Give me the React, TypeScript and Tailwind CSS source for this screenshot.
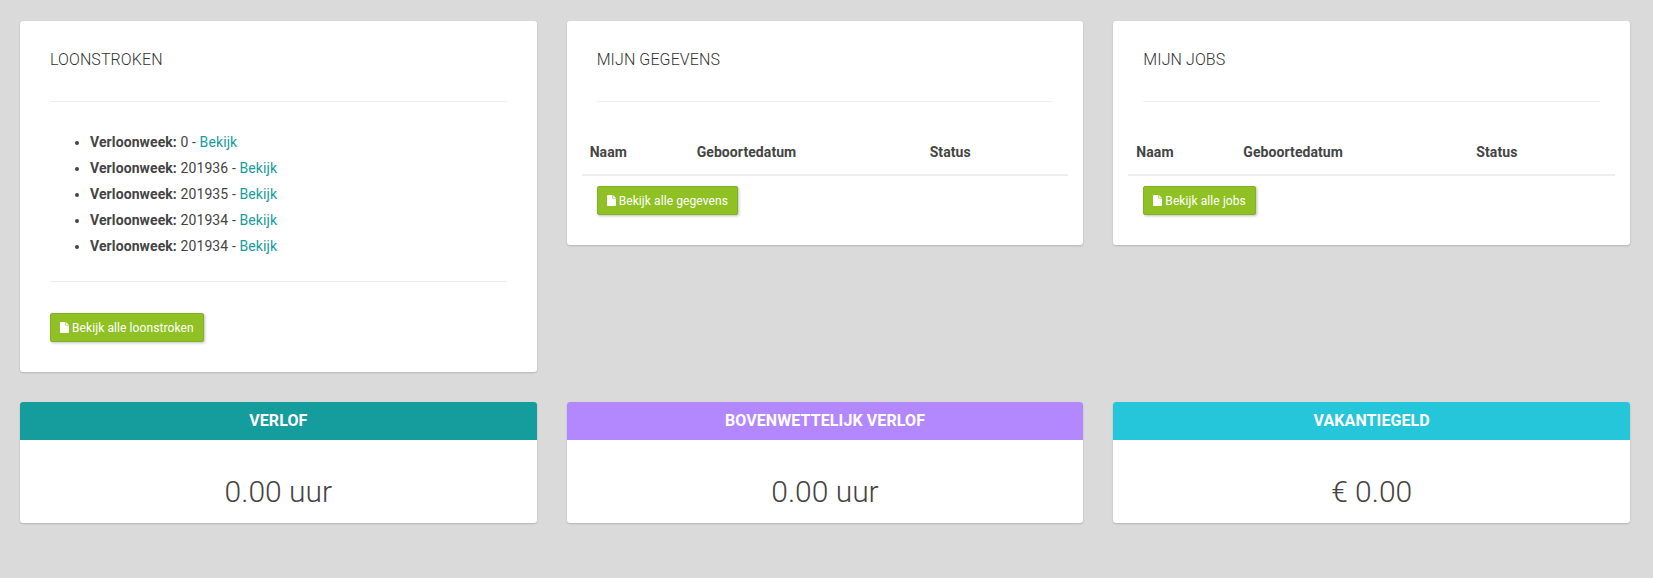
import React from "react";

const font = { fontFamily: "Roboto, sans-serif" };

function FileIcon() {
  return (
    <svg width="9" height="11" viewBox="0 0 9 11" className="shrink-0" aria-hidden="true">
      <path d="M0 .8C0 .4.4 0 .8 0H5.4V2.9C5.4 3.3 5.7 3.6 6.1 3.6H9V10.2C9 10.6 8.6 11 8.2 11H.8C.4 11 0 10.6 0 10.2Z" fill="#fff" />
      <path d="M6 0 9 3H6Z" fill="#fff" opacity=".85" />
    </svg>
  );
}

function Btn({ label }: { label: string }) {
  return (
    <button className="flex h-[29px] items-center gap-[3px] rounded-[2px] border border-[#84b021] bg-[#8fc124] px-[9px] text-[12px] tracking-[0.09px] text-white shadow-[1px_1px_3px_rgba(0,0,0,0.25)]">
      <FileIcon />
      <span>{label}</span>
    </button>
  );
}

function Title({ children }: { children: React.ReactNode }) {
  return (
    <>
      <h4 className="text-[16px] leading-[18px] font-light tracking-[0.1px] text-[#333]">{children}</h4>
      <hr className="mt-[32px] border-t border-[#eeeeee]" />
    </>
  );
}

function TableCard({ title, btn }: { title: string; btn: string }) {
  return (
    <div className="self-start rounded-[3px] bg-white px-[30px] pt-[30px] pb-[30px] shadow-[0_1px_2px_rgba(0,0,0,0.18)]">
      <Title>{title}</Title>
      <table className="mt-[27px] -mx-[15px] w-[calc(100%+30px)] table-fixed text-left text-[14px] font-bold tracking-[0.08px] text-[#444]">
        <thead>
          <tr className="border-b-2 border-[#eeeeee]">
            <th className="w-[107px] px-2 pt-[13px] pb-[12px] leading-[20px] font-bold">Naam</th>
            <th className="w-[233px] px-2 pt-[13px] pb-[12px] leading-[20px] font-bold">Geboortedatum</th>
            <th className="px-2 pt-[13px] pb-[12px] leading-[20px] font-bold">Status</th>
          </tr>
        </thead>
      </table>
      <div className="mt-[10px] flex">
        <Btn label={btn} />
      </div>
    </div>
  );
}

function StatCard({ title, value, color }: { title: string; value: string; color: string }) {
  return (
    <div className="overflow-hidden rounded-[3px] bg-white shadow-[0_1px_2px_rgba(0,0,0,0.18)]">
      <div className={`flex h-[38px] items-center justify-center text-[16px] font-bold tracking-[0.1px] text-white ${color}`}>
        {title}
      </div>
      <div className="flex h-[83px] items-start justify-center pt-[32px] text-[30px] leading-[40px] font-light text-[#444]">
        {value}
      </div>
    </div>
  );
}

const rows = ["0", "201936", "201935", "201934", "201934"];

export default function App() {
  return (
    <div style={font} className="min-h-[578px] bg-[#dadada] pt-[21px] pr-[23px] pl-[20px]">
      <div className="grid grid-cols-3 items-start gap-x-[30px] gap-y-[30px]">
        <div className="rounded-[3px] bg-white px-[30px] pt-[30px] pb-[30px] shadow-[0_1px_2px_rgba(0,0,0,0.18)]">
          <Title>LOONSTROKEN</Title>
          <ul className="mt-[27px] list-disc pl-[40px] text-[14px] leading-[26px] tracking-[0.1px] text-[#444]">
            {rows.map((r, i) => (
              <li key={i}>
                <b className="font-bold">Verloonweek:</b> {r} - <a className="text-[#159c9c]">Bekijk</a>
              </li>
            ))}
          </ul>
          <hr className="mt-[22px] border-t border-[#eeeeee]" />
          <div className="mt-[31px] flex">
            <Btn label="Bekijk alle loonstroken" />
          </div>
        </div>
        <TableCard title="MIJN GEGEVENS" btn="Bekijk alle gegevens" />
        <TableCard title="MIJN JOBS" btn="Bekijk alle jobs" />
        <StatCard title="VERLOF" value="0.00 uur" color="bg-[#159c9c]" />
        <StatCard title="BOVENWETTELIJK VERLOF" value="0.00 uur" color="bg-[#b388ff]" />
        <StatCard title="VAKANTIEGELD" value="€ 0.00" color="bg-[#26c6da]" />
      </div>
    </div>
  );
}
